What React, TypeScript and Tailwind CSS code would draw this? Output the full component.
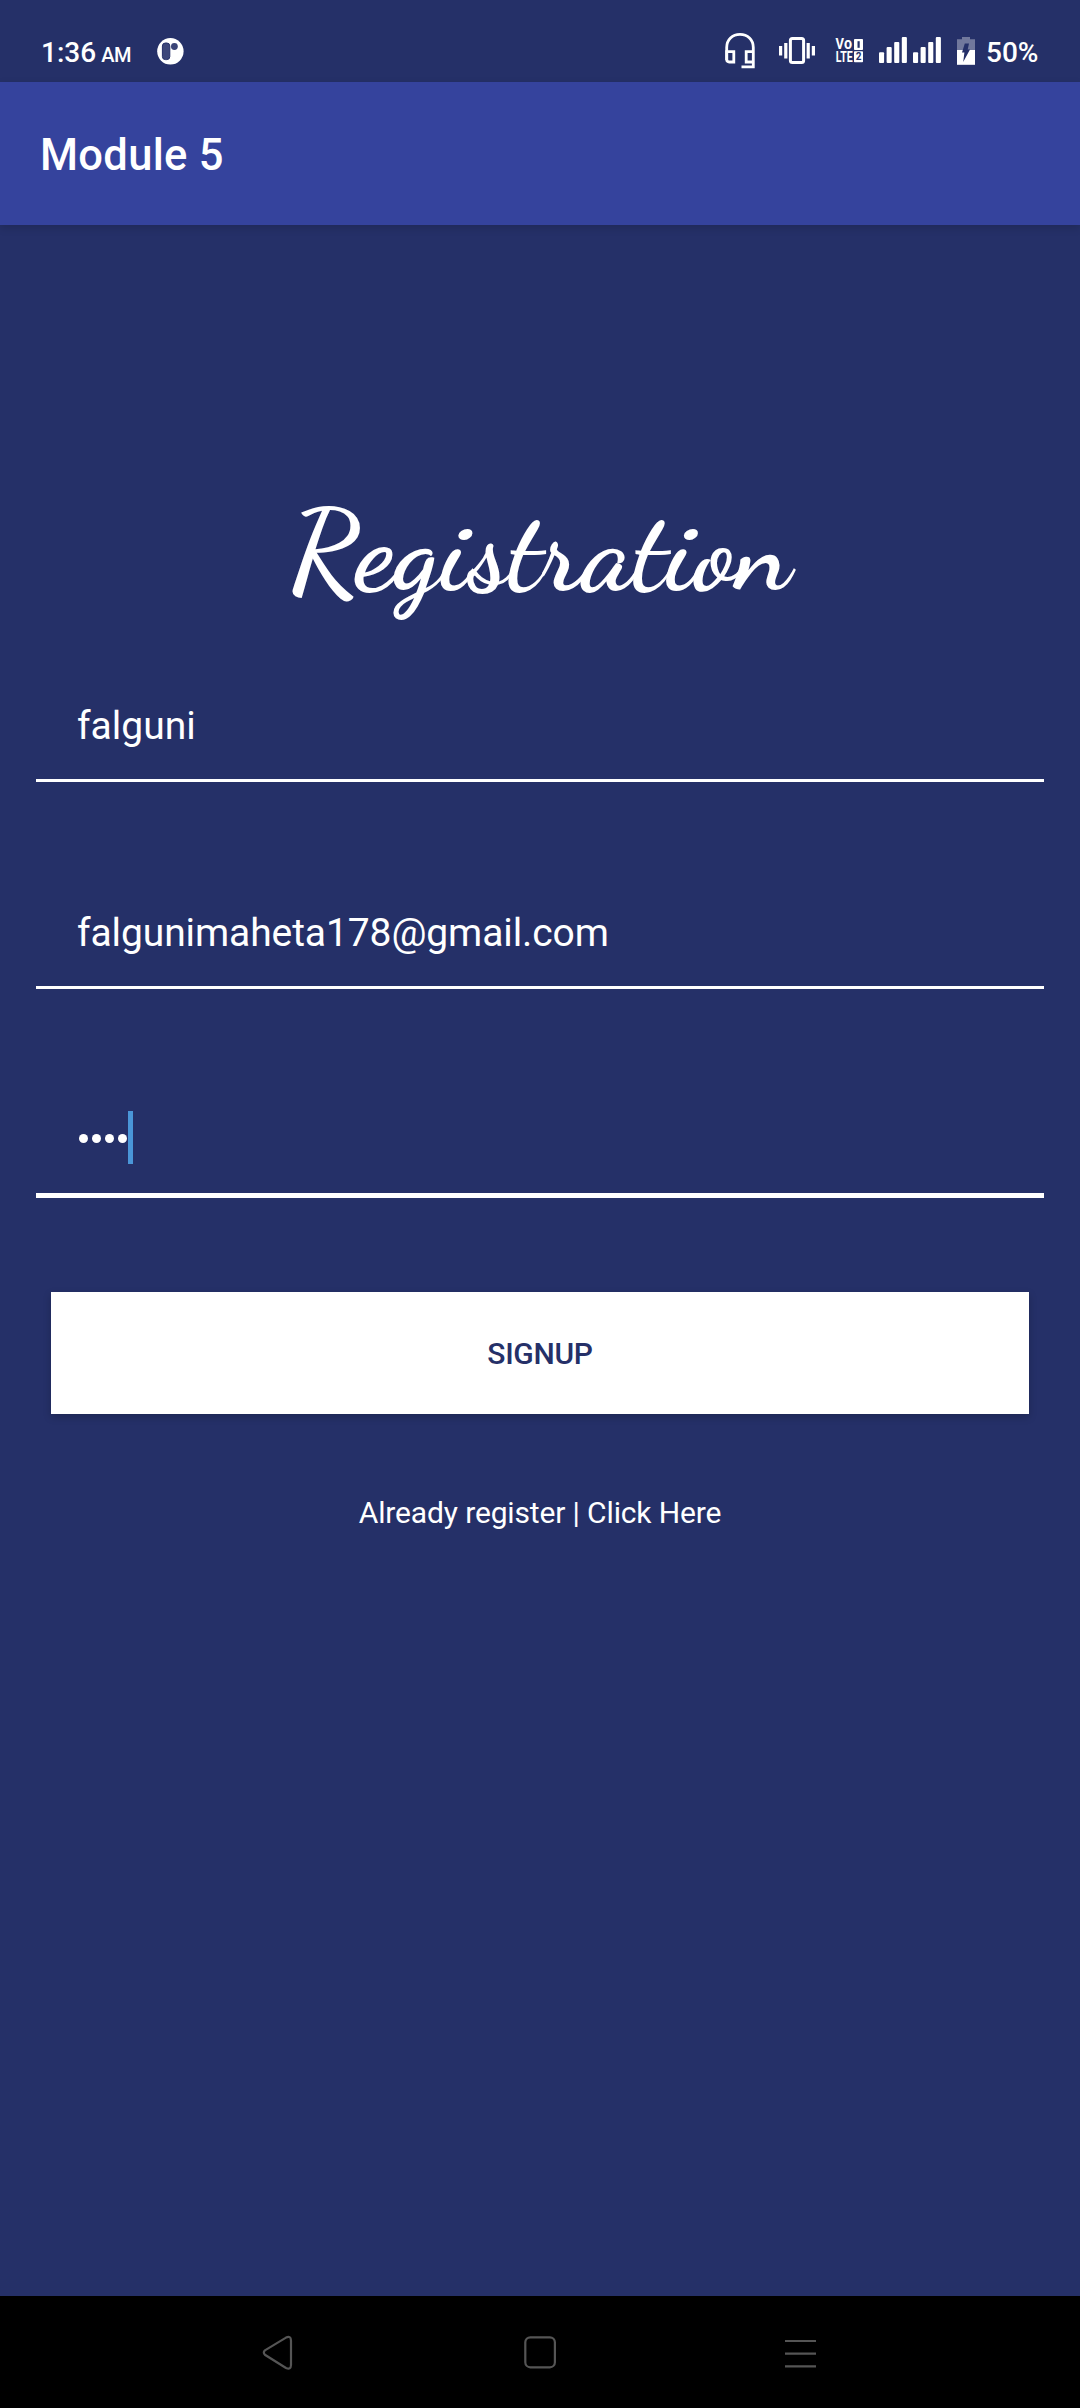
import React from 'react';

function AppBadge() {
  return (
    <svg className="ml-[26px] mt-[38px] h-[27px] w-[27px]" viewBox="0 0 27 27">
      <circle cx="13.4" cy="13.3" r="13.2" fill="#fff" />
      <rect x="5.4" y="5" width="7.4" height="16.6" rx="3" fill="#3d477a" stroke="#253068" strokeWidth="1" />
      <circle cx="17.4" cy="8.5" r="3.4" fill="#253068" fillOpacity="0.9" />
    </svg>
  );
}

function Headset() {
  return (
    <svg className="mt-[32px] h-[38px] w-[30px]" viewBox="0 0 30 38" fill="none" stroke="#fff" strokeWidth="2.8">
      <path d="M1.7 28V15.5C1.7 7.6 7.4 2.3 15 2.3S28.3 7.6 28.3 15.5V34.9H16.5" />
      <path d="M1.7 19.7H8.8V30H4.2Q1.7 30 1.7 27.5Z" />
      <path d="M28.3 19.7H21.2V30H28.3" />
    </svg>
  );
}

function Vibrate() {
  return (
    <svg className="ml-[24px] mt-[37px] h-[27px] w-[36px]" viewBox="0 0 36 27" fill="#fff">
      <rect x="11.4" y="1.6" width="13.2" height="23.8" rx="2" fill="none" stroke="#fff" strokeWidth="3" />
      <rect x="0" y="9" width="3.2" height="9.5" />
      <rect x="5.2" y="6" width="3.2" height="15.5" />
      <rect x="27.6" y="6" width="3.2" height="15.5" />
      <rect x="32.8" y="9" width="3.2" height="9.5" />
    </svg>
  );
}

function Volte() {
  return (
    <svg className="ml-[20px] mt-[38px] h-[25px] w-[29px] overflow-visible" viewBox="0 0 29 25" fill="#fff" fontFamily="Roboto, sans-serif" fontWeight="700">
      <text x="0.6" y="11.4" fontSize="14.5" textLength="16.5" lengthAdjust="spacingAndGlyphs">
        V<tspan fontSize="16">o</tspan>
      </text>
      <text x="0.8" y="24" fontSize="14.5" textLength="17" lengthAdjust="spacingAndGlyphs">LTE</text>
      <rect x="19" y="1" width="9" height="11" rx="0.8" />
      <rect x="22.5" y="3.2" width="2.2" height="6.6" fill="#253068" />
      <rect x="19" y="13.3" width="9" height="11" rx="0.8" />
      <text x="20.8" y="22.4" fontSize="10" fill="#253068">2</text>
    </svg>
  );
}

function Signal({ className }: { className: string }) {
  return (
    <svg className={className} viewBox="0 0 28 26" fill="#fff">
      <rect x="0" y="15.3" width="5.1" height="10.7" rx="1" />
      <rect x="7.6" y="10" width="5.1" height="16" rx="1" />
      <rect x="15.2" y="5" width="5.1" height="21" rx="1" />
      <rect x="22.8" y="0" width="5.1" height="26" rx="1" />
    </svg>
  );
}

function Battery() {
  return (
    <svg className="ml-[16px] mt-[37px] h-[28px] w-[18px]" viewBox="0 0 18 28">
      <path d="M0 2.2H5V0H13V2.2H18V13H0Z" fill="#fff" fillOpacity="0.35" />
      <rect y="13" width="18" height="14.8" fill="#fff" />
      <path d="M7.8 6.5H12L10.7 12.5H13L6.2 25L7.4 15.4H5Z" fill="#253068" />
    </svg>
  );
}

function StatusBar() {
  return (
    <header className="flex h-[82px] items-start text-white">
      <div className="ml-[41px] mt-[36px] flex items-baseline font-medium leading-[34px]">
        <span className="text-[28px]">1:36</span>
        <span className="ml-[5px] text-[20px] tracking-[-0.5px]">AM</span>
      </div>
      <AppBadge />
      <div className="ml-auto flex items-start">
        <Headset />
        <Vibrate />
        <Volte />
        <Signal className="ml-[15px] mt-[37px] h-[26px] w-[28px]" />
        <Signal className="ml-[6px] mt-[37px] h-[26px] w-[28px]" />
        <Battery />
        <span className="ml-[11px] mr-[40px] mt-[36px] w-[54px] text-[28px] font-medium leading-[34px]">50%</span>
      </div>
    </header>
  );
}

function NavigationBar() {
  return (
    <nav className="flex h-[112px] items-start bg-black pl-[262px] pt-[39px]">
      <svg className="h-[36px] w-[32px]" viewBox="0 0 32 36" fill="none" stroke="#555" strokeWidth="2.2">
        <path d="M2.9 15.4L24 2.6Q28.8 0.2 29 5.5V30Q28.8 35.3 24 33L2.9 19.8Q0.7 17.6 2.9 15.4Z" />
      </svg>
      <svg className="ml-[229px] h-[36px] w-[34px]" viewBox="0 0 34 36" fill="none" stroke="#555" strokeWidth="2.2">
        <rect x="2.3" y="2.3" width="29.6" height="30" rx="5" />
      </svg>
      <svg className="ml-[227px] h-[36px] w-[34px]" viewBox="0 0 34 36" stroke="#555" strokeWidth="2.2">
        <path d="M1 6H32M1 18.7H32M1 31.4H32" />
      </svg>
    </nav>
  );
}

export default function App() {
  return (
    <div className="flex h-[2408px] w-[1080px] flex-col overflow-hidden bg-[#253068] font-[Roboto,sans-serif] text-white">
      <StatusBar />
      <div className="flex h-[143px] shrink-0 items-center bg-[#35439d] pl-[40px] pt-[4px] shadow-[0_3px_8px_rgba(0,0,0,0.15)]">
        <h1 className="text-[43.5px] font-medium leading-[50px] tracking-[0.3px]">Module 5</h1>
      </div>
      <main className="flex flex-1 flex-col">
        <h2 className="mt-[247px] h-[160px] whitespace-nowrap text-center font-['Dancing_Script','Liberation_Serif',cursive] text-[114px] font-bold leading-[160px]">
          Registration
        </h2>
        <div className="mx-[36px] mt-[47px] h-[103px] border-b-[3px] border-white pl-[41px] pt-[23px]">
          <p className="text-[39px] leading-[48px]">falguni</p>
        </div>
        <div className="mx-[36px] mt-[104px] h-[103px] border-b-[3px] border-white pl-[41px] pt-[23px]">
          <p className="text-[39px] leading-[48px] tracking-[-0.1px]">falgunimaheta178@gmail.com</p>
        </div>
        <div className="mx-[36px] mt-[104px] flex h-[105px] items-start border-b-[5px] border-white pl-[43px] pt-[18px]">
          <div className="mt-[23px] flex gap-[4px]">
            <i className="size-[9px] rounded-full bg-white" />
            <i className="size-[9px] rounded-full bg-white" />
            <i className="size-[9px] rounded-full bg-white" />
            <i className="size-[9px] rounded-full bg-white" />
          </div>
          <span className="ml-px h-[53px] w-[5px] bg-[#4a96d8]" />
        </div>
        <button className="mx-[51px] mt-[94px] h-[122px] bg-white text-[30px] font-medium tracking-[-0.3px] text-[#253068] shadow-[0_3px_8px_rgba(0,0,0,0.2)]">
          SIGNUP
        </button>
        <p className="mt-[80px] text-center text-[30px] leading-[38px] tracking-[-0.14px]">Already register | Click Here</p>
      </main>
      <NavigationBar />
    </div>
  );
}
